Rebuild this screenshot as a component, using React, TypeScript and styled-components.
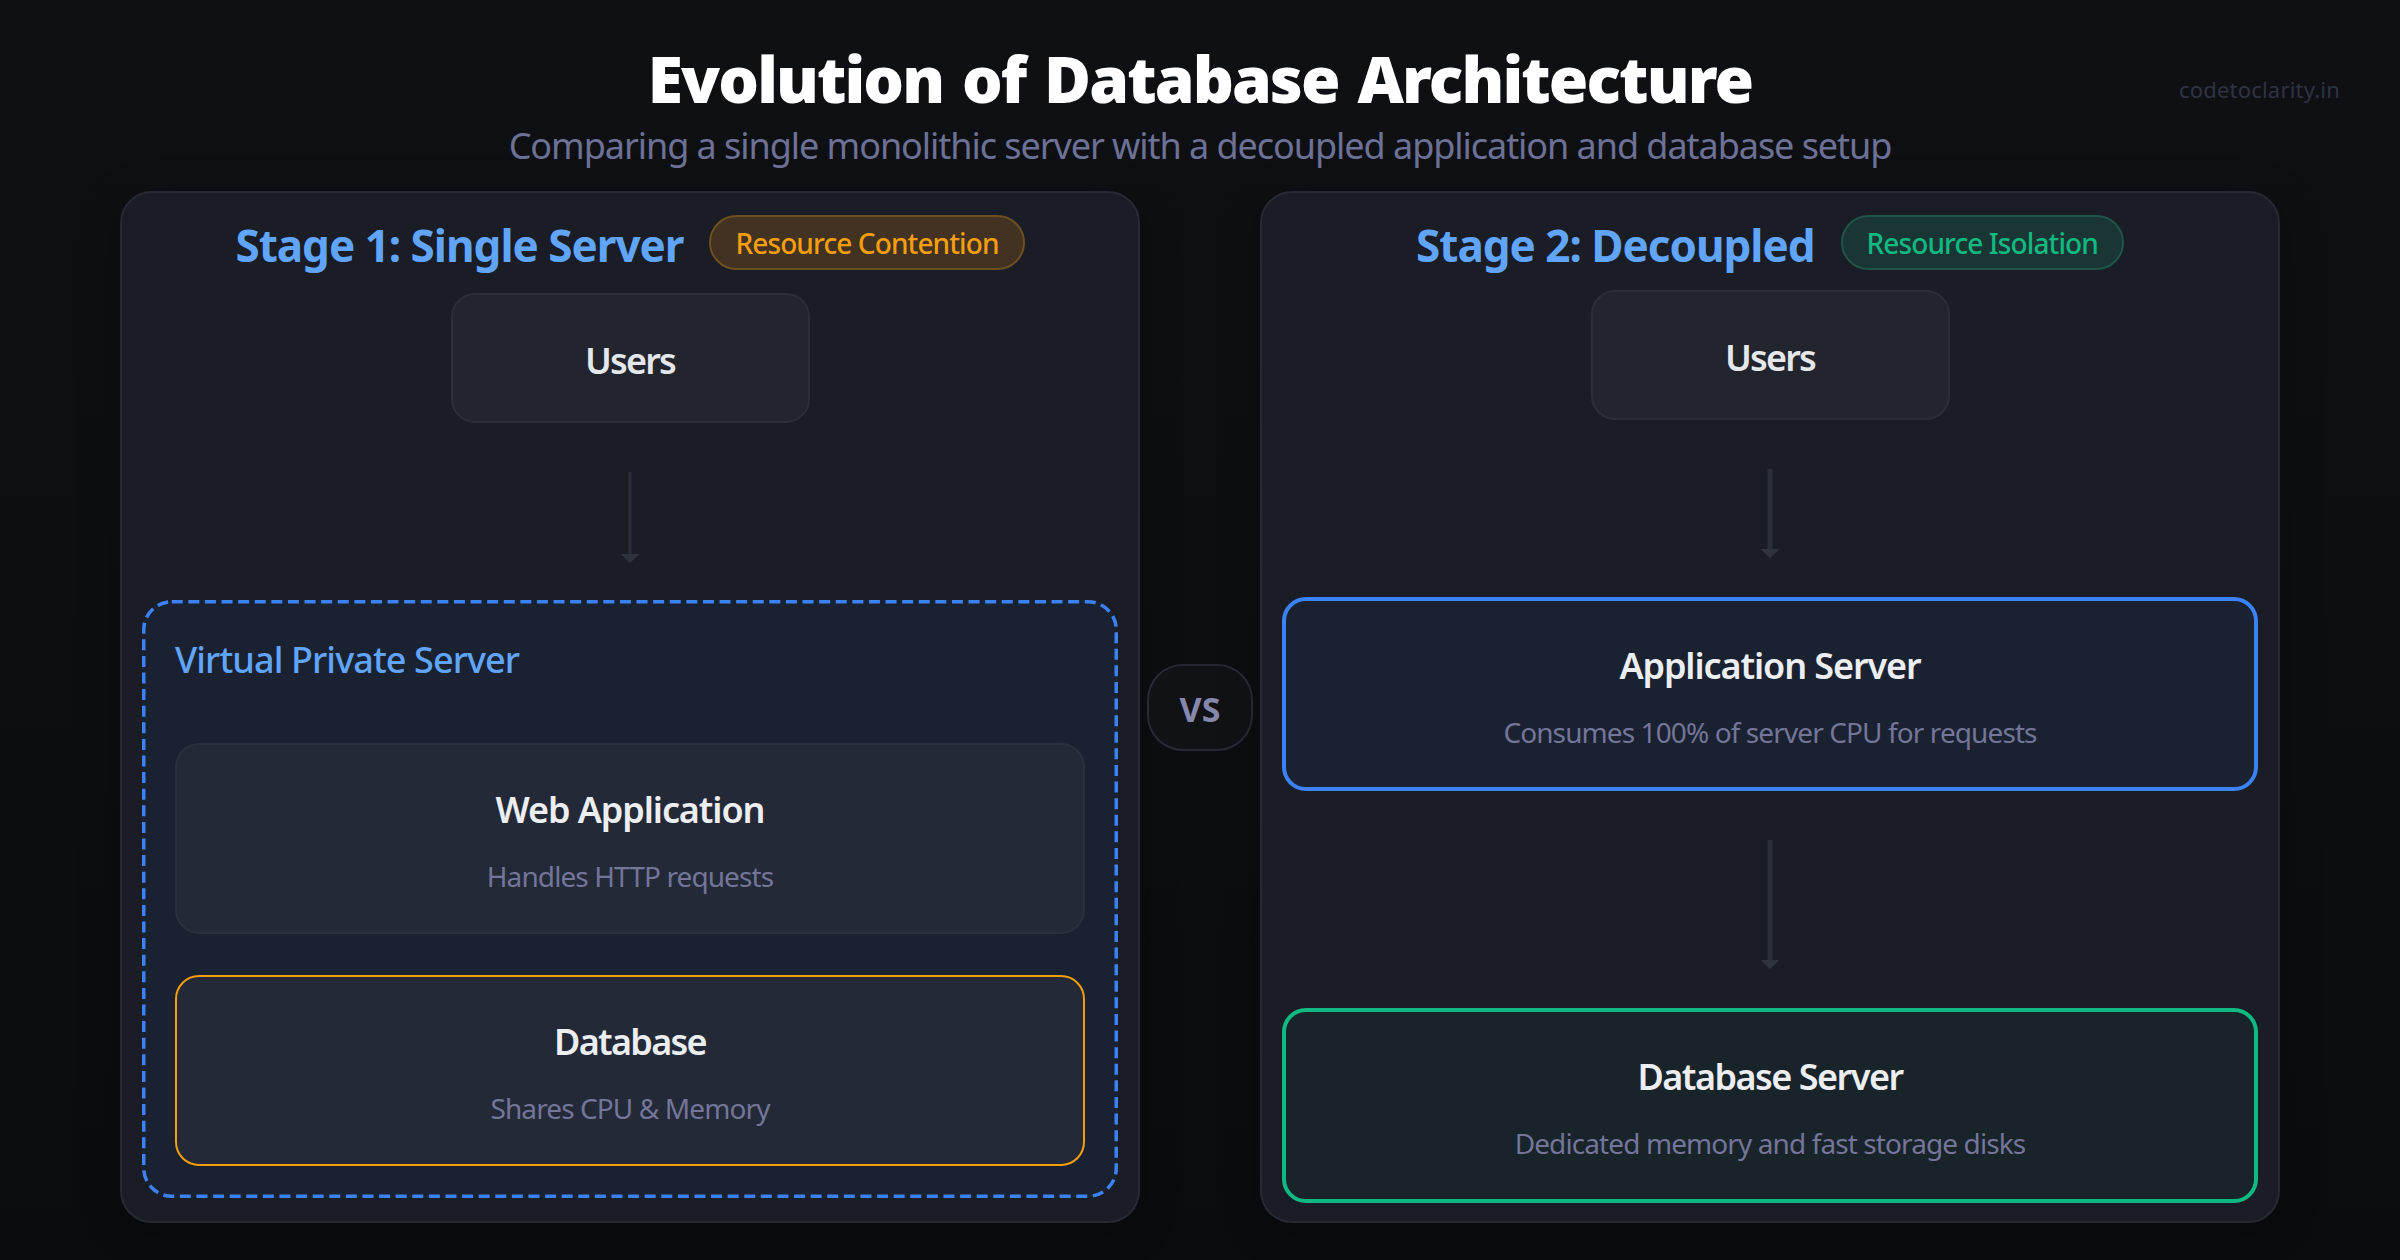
import styled, { createGlobalStyle } from 'styled-components';

const GlobalStyle = createGlobalStyle`
  html, body {
    margin: 0;
    padding: 0;
    background: #0c0e12;
  }
  * {
    box-sizing: border-box;
  }
`;

const Page = styled.div`
  position: relative;
  width: 2400px;
  height: 1260px;
  overflow: hidden;
  padding-top: 37px;
  background: linear-gradient(180deg, #0e1014 0%, #0a0c10 100%);
  font-family: 'Noto Sans', 'Open Sans', sans-serif;
`;

const Title = styled.h1`
  margin: 0;
  height: 84px;
  line-height: 84px;
  font-size: 64px;
  font-weight: 900;
  letter-spacing: -1.9px;
  word-spacing: 4px;
  color: #ffffff;
  text-align: center;
`;

const Subtitle = styled.p`
  margin: -3px 0 0;
  height: 56px;
  line-height: 56px;
  font-size: 36px;
  letter-spacing: -1.05px;
  color: #6e7196;
  text-align: center;
`;

const Watermark = styled.span`
  position: absolute;
  top: 74px;
  right: 60px;
  font-size: 22px;
  letter-spacing: 0.2px;
  color: #2f3341;
`;

const Columns = styled.div`
  display: grid;
  grid-template-columns: 1020px 120px 1020px;
  justify-content: center;
  align-items: center;
  margin-top: 17px;
`;

const Panel = styled.section`
  display: flex;
  flex-direction: column;
  align-items: center;
  height: 1032px;
  padding: 22px 20px 18px;
  background: #1a1d25;
  border: 2px solid #262a33;
  border-radius: 32px;
  box-shadow: 0 8px 40px rgba(0, 0, 0, 0.25);
`;

const PanelHeader = styled.div`
  display: flex;
  align-items: center;
  gap: 26px;
  height: 55px;
`;

const PanelTitle = styled.h2`
  margin: 4px 0 0;
  font-size: 44px;
  font-weight: 700;
  letter-spacing: -1px;
  color: #60a5fa;
  white-space: nowrap;
`;

const Badge = styled.span<{ $tone: 'amber' | 'green' }>`
  display: flex;
  align-items: center;
  height: 55px;
  padding: 0 24px;
  font-size: 28px;
  font-weight: 500;
  letter-spacing: -0.9px;
  white-space: nowrap;
  border-radius: 28px;
  color: ${(p) => (p.$tone === 'amber' ? '#f59e0b' : '#10b981')};
  background: ${(p) => (p.$tone === 'amber' ? '#413222' : '#1a3634')};
  border: 2px solid ${(p) => (p.$tone === 'amber' ? '#6e4f1f' : '#1f5547')};
`;

const UsersBox = styled.div<{ $top: number }>`
  display: flex;
  align-items: center;
  justify-content: center;
  flex: none;
  width: 359px;
  height: 130px;
  margin-top: ${(p) => p.$top}px;
  padding-top: 4px;
  font-size: 36px;
  font-weight: 600;
  letter-spacing: -1.8px;
  color: #e5e7eb;
  background: #22252e;
  border: 2px solid #2a2e38;
  border-radius: 24px;
`;

const ArrowWrap = styled.div<{ $height: number; $gap: number }>`
  flex: none;
  display: flex;
  width: 20px;
  height: ${(p) => p.$height}px;
  margin: 49px 0 ${(p) => p.$gap}px;
`;

const ServerBox = styled.div`
  position: relative;
  align-self: stretch;
  flex: none;
  height: 598px;
  padding: 35px 33px 0;
  background: #1a2130;
  border-radius: 30px;
`;

const DashedOutline = styled.svg`
  position: absolute;
  inset: 0;
  width: 100%;
  height: 100%;
  fill: none;
  stroke: #3b82f6;
  stroke-width: 3.5;
  stroke-dasharray: 11 5.6;
`;

const ServerLabel = styled.div`
  height: 50px;
  line-height: 50px;
  margin-bottom: 58px;
  font-size: 36px;
  font-weight: 500;
  letter-spacing: -0.9px;
  color: #60a5fa;
`;

const Stack = styled.div`
  display: flex;
  flex-direction: column;
  gap: 41px;
`;

const Node = styled.div<{ $border: string; $width: number; $bg: string; $height: number }>`
  display: flex;
  flex-direction: column;
  align-items: center;
  justify-content: center;
  flex: none;
  align-self: stretch;
  height: ${(p) => p.$height}px;
  padding-top: 3px;
  gap: 22px;
  background: ${(p) => p.$bg};
  border: ${(p) => p.$width}px solid ${(p) => p.$border};
  border-radius: 24px;
`;

const NodeTitle = styled.div<{ $track?: number }>`
  font-size: 36px;
  line-height: 50px;
  font-weight: 600;
  letter-spacing: ${(p) => p.$track ?? -1.1}px;
  color: #eceef2;
`;

const NodeSub = styled.div`
  font-size: 28px;
  line-height: 38px;
  letter-spacing: -0.9px;
  color: #737599;
`;

const VsBadge = styled.div`
  display: flex;
  align-items: center;
  justify-content: center;
  justify-self: center;
  width: 106px;
  height: 87px;
  padding-top: 3px;
  font-size: 34px;
  font-weight: 700;
  color: #8787ab;
  background: #101216;
  border: 2px solid #272a33;
  border-radius: 36px;
`;

const Arrow = ({ height, gap, stroke = 3 }: { height: number; gap: number; stroke?: number }) => (
  <ArrowWrap $height={height} $gap={gap}>
    <svg width="20" height={height} viewBox={`0 0 20 ${height}`}>
      <rect x={10 - stroke / 2} y="0" width={stroke} height={height - 9} fill="#2b2f3a" />
      <path d={`M0.5 ${height - 9} H19.5 L10 ${height} Z`} fill="#2f333e" />
    </svg>
  </ArrowWrap>
);

const App = () => {
  return (
    <Page>
      <GlobalStyle />
      <Title>Evolution of Database Architecture</Title>
      <Subtitle>Comparing a single monolithic server with a decoupled application and database setup</Subtitle>
      <Watermark>codetoclarity.in</Watermark>
      <Columns>
        <Panel>
          <PanelHeader>
            <PanelTitle>Stage 1: Single Server</PanelTitle>
            <Badge $tone="amber">Resource Contention</Badge>
          </PanelHeader>
          <UsersBox $top={23}>Users</UsersBox>
          <Arrow height={91} gap={37} />
          <ServerBox>
            <DashedOutline viewBox="0 0 976 598">
              <rect x="1.75" y="1.75" width="972.5" height="594.5" rx="28" />
            </DashedOutline>
            <ServerLabel>Virtual Private Server</ServerLabel>
            <Stack>
              <Node $bg="#232937" $border="#2a303d" $width={2} $height={191}>
                <NodeTitle>Web Application</NodeTitle>
                <NodeSub>Handles HTTP requests</NodeSub>
              </Node>
              <Node $bg="#232937" $border="#f59e0b" $width={2} $height={191}>
                <NodeTitle $track={-1.7}>Database</NodeTitle>
                <NodeSub>Shares CPU &amp; Memory</NodeSub>
              </Node>
            </Stack>
          </ServerBox>
        </Panel>
        <VsBadge>VS</VsBadge>
        <Panel>
          <PanelHeader>
            <PanelTitle>Stage 2: Decoupled</PanelTitle>
            <Badge $tone="green">Resource Isolation</Badge>
          </PanelHeader>
          <UsersBox $top={20}>Users</UsersBox>
          <Arrow height={89} gap={39} stroke={5} />
          <Node $bg="#1a2130" $border="#3b82f6" $width={4} $height={194}>
            <NodeTitle>Application Server</NodeTitle>
            <NodeSub>Consumes 100% of server CPU for requests</NodeSub>
          </Node>
          <Arrow height={129} gap={39} stroke={5} />
          <Node $bg="#18232a" $border="#10b981" $width={4} $height={195}>
            <NodeTitle $track={-1.5}>Database Server</NodeTitle>
            <NodeSub>Dedicated memory and fast storage disks</NodeSub>
          </Node>
        </Panel>
      </Columns>
    </Page>
  );
};

export default App;
